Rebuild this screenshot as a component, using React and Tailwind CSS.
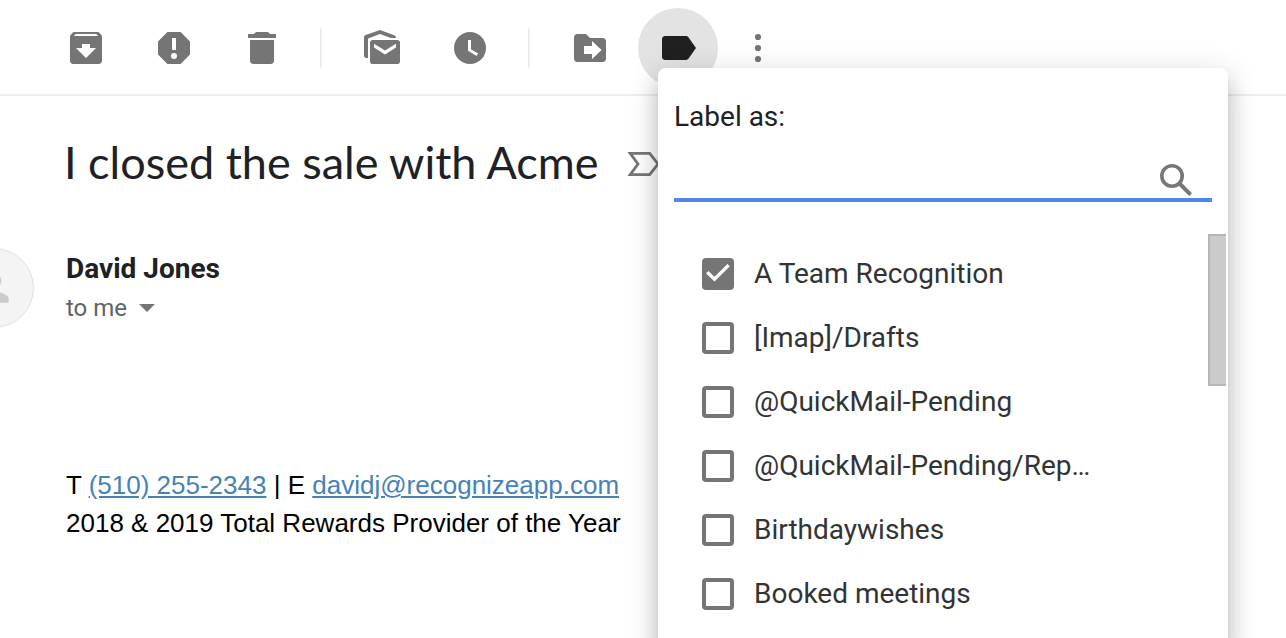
import React, { useState } from "react";

const labels = [
  "A Team Recognition",
  "[Imap]/Drafts",
  "@QuickMail-Pending",
  "@QuickMail-Pending/Rep…",
  "Birthdaywishes",
  "Booked meetings",
];

function Icon({ children }) {
  return (
    <svg viewBox="0 0 20 20" className="size-10" fill="currentColor" aria-hidden="true">
      {children}
    </svg>
  );
}

function ToolButton({ label, children }) {
  return (
    <button type="button" aria-label={label} className="flex size-20 shrink-0 items-center justify-center rounded-full">
      <Icon>{children}</Icon>
    </button>
  );
}

function Separator() {
  return <div className="mr-3 ml-2.5 h-10 w-0.5 shrink-0 bg-[#ededed]" />;
}

function LabelMenu() {
  const [checked, setChecked] = useState(["A Team Recognition"]);

  const toggle = (name) => {
    setChecked(checked.includes(name) ? checked.filter((item) => item !== name) : [...checked, name]);
  };

  return (
    <div className="absolute top-[60px] left-5 z-10 w-[570px] rounded-lg bg-white pt-8 pb-8 shadow-[0_16px_20px_2px_rgba(0,0,0,0.14),0_6px_28px_4px_rgba(0,0,0,0.12),0_10px_10px_-6px_rgba(0,0,0,0.2)]">
      <div className="px-4">
        <label htmlFor="label-search" className="block text-[28px] leading-[34px] text-[#202124]">
          Label as:
        </label>
        <div className="flex items-center border-b-4 border-[#4f86ec] pt-7 pr-5">
          <input id="label-search" type="text" className="h-9 min-w-0 flex-1 text-[28px] outline-none" />
          <svg viewBox="0 0 32 32" className="size-8 text-[#777]" fill="none" stroke="currentColor" aria-hidden="true">
            <circle cx="12" cy="12" r="10.2" strokeWidth="3.6" />
            <path d="M19.5 19.5 30.6 30.6" strokeWidth="4" />
          </svg>
        </div>
      </div>

      <div className="mt-8 mr-0.5 flex items-start">
        <ul className="flex-1 pt-2 pl-11">
          {labels.map((name) => (
            <li key={name}>
              <label className="flex h-16 items-center gap-5 text-[28px] leading-[34px] text-[#333]">
                <span className="relative size-8 shrink-0">
                  <input
                    type="checkbox"
                    checked={checked.includes(name)}
                    onChange={() => toggle(name)}
                    className="block size-8 appearance-none rounded-sm border-4 border-[#757575] checked:bg-[#757575]"
                  />
                  {checked.includes(name) && (
                    <svg viewBox="0 0 32 32" className="pointer-events-none absolute inset-0 size-8" fill="none" stroke="white" strokeWidth="3.4">
                      <path d="M5.3 14.2 12.5 21.2 26.6 7.1" />
                    </svg>
                  )}
                </span>
                {name}
              </label>
            </li>
          ))}
        </ul>
        <div className="h-[152px] w-[18px] border-2 border-r-0 border-[#b6b6b6] bg-[#cbcbcb]" />
      </div>
    </div>
  );
}

function Toolbar() {
  return (
    <header className="flex items-center gap-2 border-b-2 border-[#eee] pt-2 pb-1.5 pl-[46px] text-[#757575]">
      <ToolButton label="Archive">
        <path
          fillRule="evenodd"
          d="M17.6 3.4 16.6 2.3A1 1 0 0 0 15.8 2H4.2a1 1 0 0 0-.8.3L2.3 3.5A1.4 1.4 0 0 0 2 4.4v12C2 17.3 2.7 18 3.6 18h12.8c.9 0 1.6-.7 1.6-1.6v-12c0-.4-.1-.7-.4-1zM4.9 3h10.2l1 1H3.9zM10 15 5 10h3V8h4v2h3z"
        />
      </ToolButton>
      <ToolButton label="Report spam">
        <path fillRule="evenodd" d="M13.3 2H6.7L2 6.7v6.6L6.7 18h6.6l4.7-4.7V6.7zM9 5h2v6H9zM10 15.5a1.5 1.5 0 1 1 0-3 1.5 1.5 0 0 1 0 3z" />
      </ToolButton>
      <ToolButton label="Delete">
        <path d="M3 3h3l1-1h6l1 1h3v2H3zM4 6h12v10.3a1.7 1.7 0 0 1-1.7 1.7H5.7A1.7 1.7 0 0 1 4 16.3z" />
      </ToolButton>
      <Separator />
      <ToolButton label="Mark as unread">
        <path d="M9 1 1.8 3.5C1.3 3.7 1 4.2 1 4.8v9c0 .7.5 1.2 1.2 1.2H3V5.2L9 3l5.5 2H17c0-.7-.4-1.2-.9-1.4z" />
        <path fillRule="evenodd" d="M5.3 6h12.4c.7 0 1.3.6 1.3 1.3v9.4c0 .7-.6 1.3-1.3 1.3H5.3C4.6 18 4 17.4 4 16.7V7.3C4 6.6 4.6 6 5.3 6zM6 7.9v1.8l5.5 3.5L17 9.7V7.9l-5.500 3.300z" />
      </ToolButton>
      <ToolButton label="Snooze">
        <path fillRule="evenodd" d="M10 2a8 8 0 1 0 0 16 8 8 0 0 0 0-16zM9 6h1.5v4.6l3.5 2.1-.7 1.3L9 11.4z" />
      </ToolButton>
      <Separator />
      <ToolButton label="Move to">
        <path fillRule="evenodd" d="M3.6 3H8l2 2h6.4c.9 0 1.6.7 1.6 1.6v8.8c0 .9-.7 1.6-1.6 1.6H3.6C2.7 17 2 16.3 2 15.4V4.6C2 3.7 2.7 3 3.6 3zM7 9v4h4v2.5l4.8-4.5L11 6.5V9z" />
      </ToolButton>
      <div className="relative shrink-0">
        <button type="button" aria-label="Labels" className="flex size-20 items-center justify-center rounded-full bg-[#e3e3e3] text-[#202020]">
          <Icon>
            <path d="M3.5 4H14c.5 0 1 .3 1.3.7L19 10l-3.7 5.3c-.3.4-.8.7-1.3.7H3.5c-.8 0-1.5-.7-1.5-1.5v-9C2 4.7 2.7 4 3.5 4z" />
          </Icon>
        </button>
        <LabelMenu />
      </div>
      <button type="button" aria-label="More" className="flex h-20 w-16 shrink-0 items-center justify-center">
        <Icon>
          <circle cx="10" cy="4.5" r="1.55" />
          <circle cx="10" cy="10" r="1.55" />
          <circle cx="10" cy="15.5" r="1.55" />
        </Icon>
      </button>
    </header>
  );
}

function App() {
  return (
    <div className="h-screen overflow-hidden bg-white font-['Roboto',sans-serif] text-[#202124]">
      <Toolbar />
      <main>
        <div className="flex items-start gap-7 pt-10 pl-16">
          <h1 className="font-['Lato',sans-serif] text-[45px] leading-[52px] whitespace-nowrap">I closed the sale with Acme</h1>
          <button type="button" aria-label="Mark as important" className="pt-4 text-[#757575]">
            <svg viewBox="0 0 34 24" className="h-6 w-[34px]" fill="none" stroke="currentColor" strokeWidth="2.8">
              <path d="M3.2 1.4H22.700L31 12 22.700 22.600H3.200L11 12z" />
            </svg>
          </button>
        </div>

        <div className="mt-[60px] flex gap-8">
          <div className="-ml-[46px] flex size-20 shrink-0 items-center justify-center rounded-full border border-[#e0e0e0] bg-[#f4f4f4] text-[#cbcbcb]">
            <svg viewBox="0 0 24 24" className="size-11" fill="currentColor" aria-hidden="true">
              <path d="M12 12a4 4 0 1 0 0-8 4 4 0 0 0 0 8zm0 2c-2.7 0-8 1.3-8 4v2h16v-2c0-2.7-5.3-4-8-4z" />
            </svg>
          </div>
          <div>
            <div className="text-[28px] leading-[42px] font-bold">David Jones</div>
            <button type="button" className="flex items-center gap-3 text-[24px] leading-9 text-[#5f6368]">
              to me
              <svg viewBox="0 0 16 8" className="h-2 w-4" fill="#757575" aria-hidden="true">
                <path d="M0 0h16L8 8z" />
              </svg>
            </button>
          </div>
        </div>

        <div className="mt-[138px] pl-[66px] font-['Liberation_Sans',Arial,sans-serif] text-[26px] leading-[38px] text-black">
          <p>
            T{" "}
            <a href="tel:5102552343" className="text-[#4682b8] underline">
              (510) 255-2343
            </a>{" "}
            | E{" "}
            <a href="mailto:davidj@recognizeapp.com" className="text-[#4682b8] underline">
              davidj@recognizeapp.com
            </a>
          </p>
          <p>2018 &amp; 2019 Total Rewards Provider of the Year</p>
        </div>
      </main>
    </div>
  );
}

export default App;
